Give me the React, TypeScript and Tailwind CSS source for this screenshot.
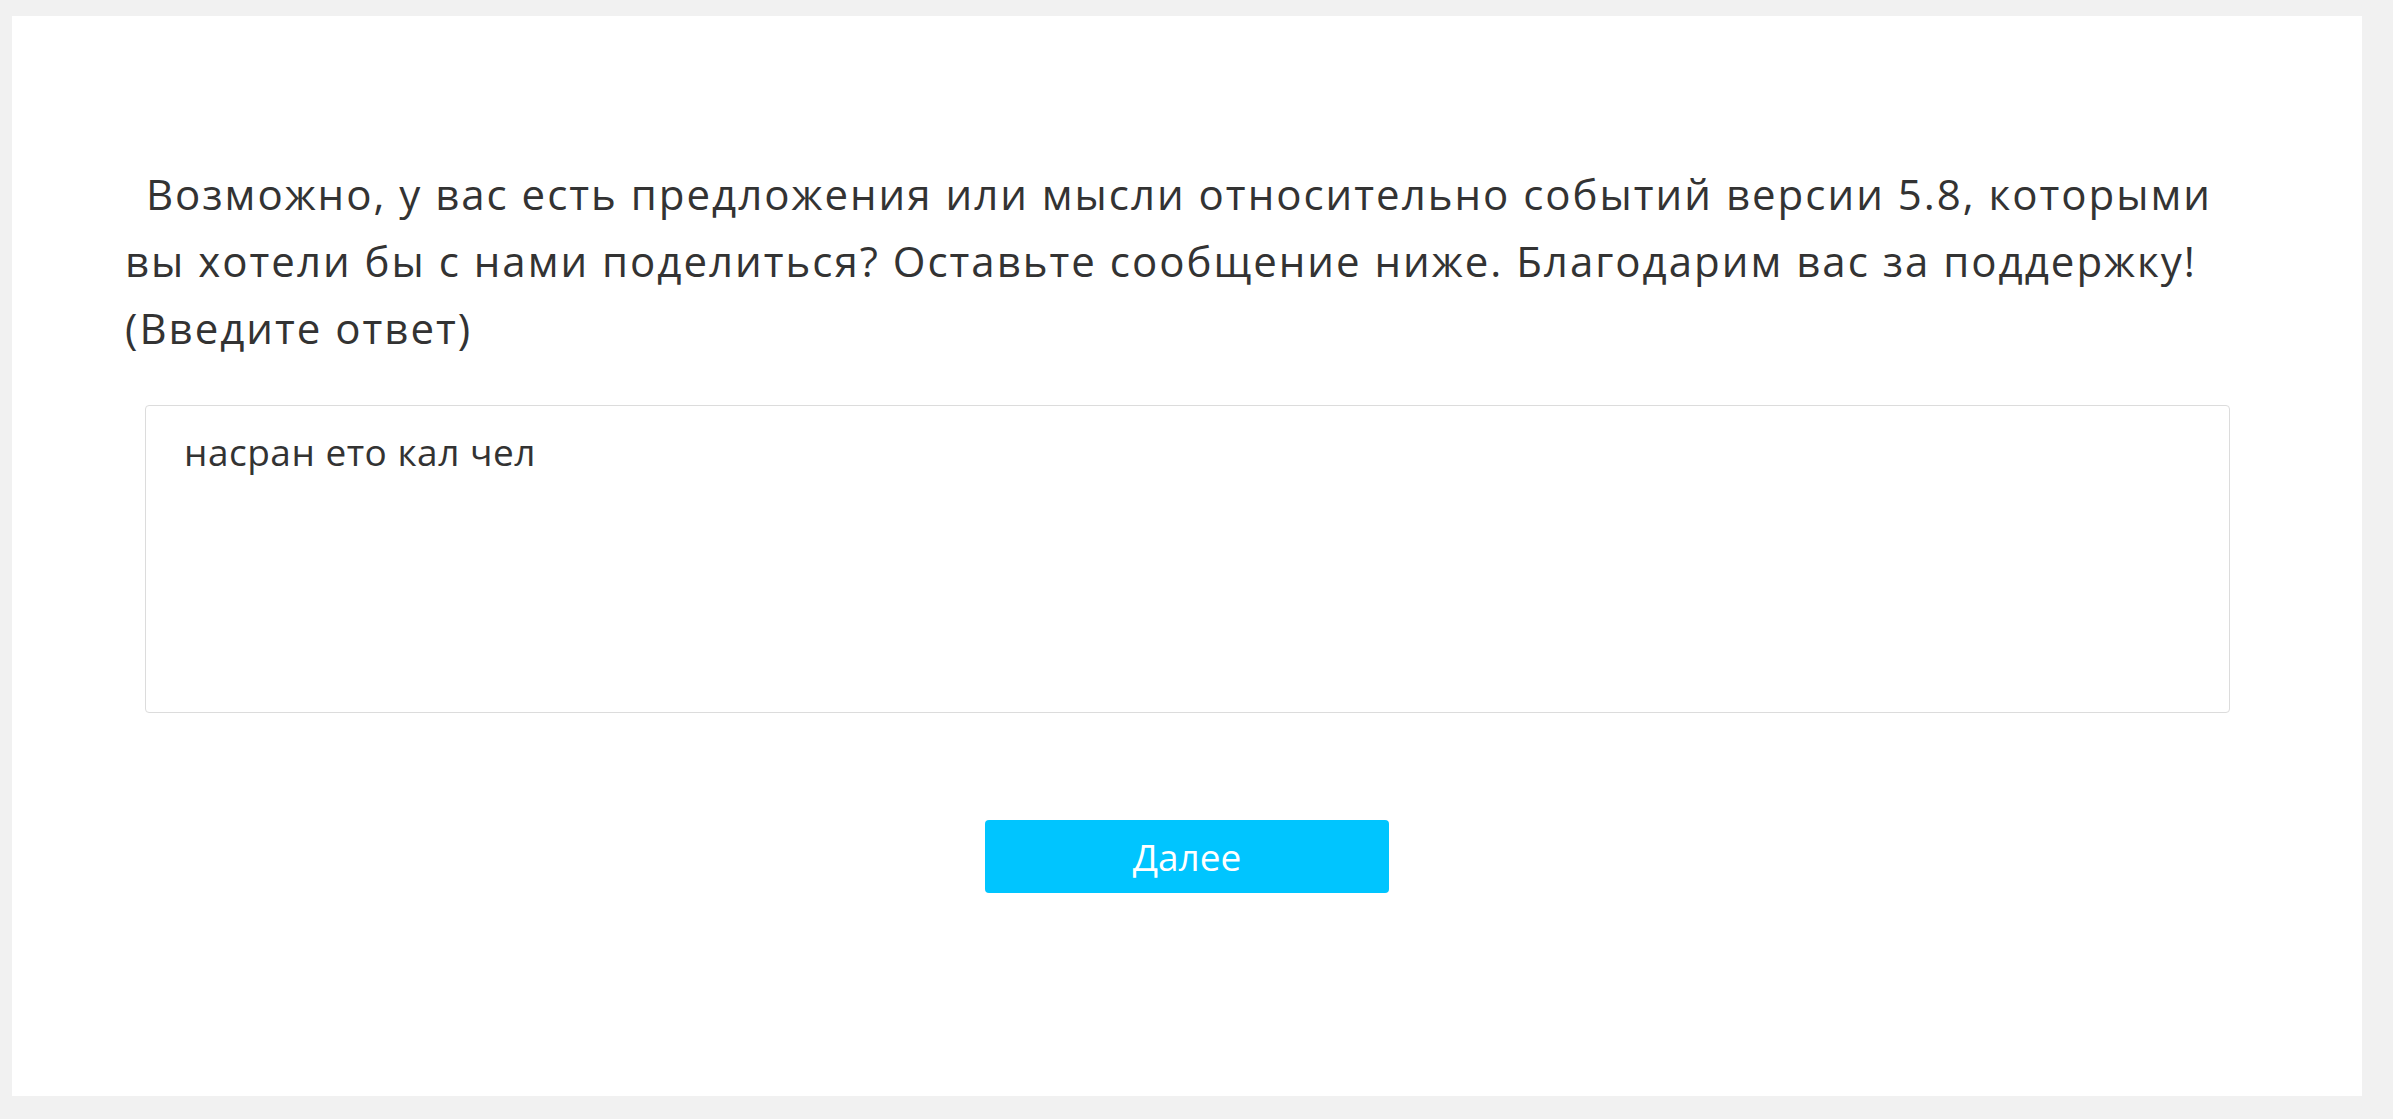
export default function App() {
  return (
    <div className="min-h-screen w-full bg-[#f1f1f1] pt-[16px] pl-[12px] font-['Open_Sans',sans-serif]">
      <main className="flex h-[1080px] w-[2350px] flex-col bg-white px-[113px] pt-[144px]">
        <p className="mr-[19px] indent-[8px] text-[42px] leading-[67px] tracking-[2px] text-[#333333]">
          {'\u00a0'}Возможно, у вас есть предложения или мысли относительно событий версии 5.8, которыми вы
          хотели бы с нами поделиться? Оставьте сообщение ниже. Благодарим вас за поддержку! (Введите ответ)
        </p>

        <textarea
          readOnly
          defaultValue="насран ето кал чел"
          className="mt-[44px] ml-[20px] h-[308px] w-[2085px] resize-none rounded-[4px] border border-[#dcdcdc] px-[38px] pt-[19px] text-[37px] leading-[54px] tracking-[0.5px] text-[#333333] outline-none"
        />

        <div className="mt-[107px] flex justify-center">
          <button className="h-[73px] w-[404px] rounded-[4px] bg-[#00c5ff] text-[37px] text-white">
            Далее
          </button>
        </div>
      </main>
    </div>
  );
}
